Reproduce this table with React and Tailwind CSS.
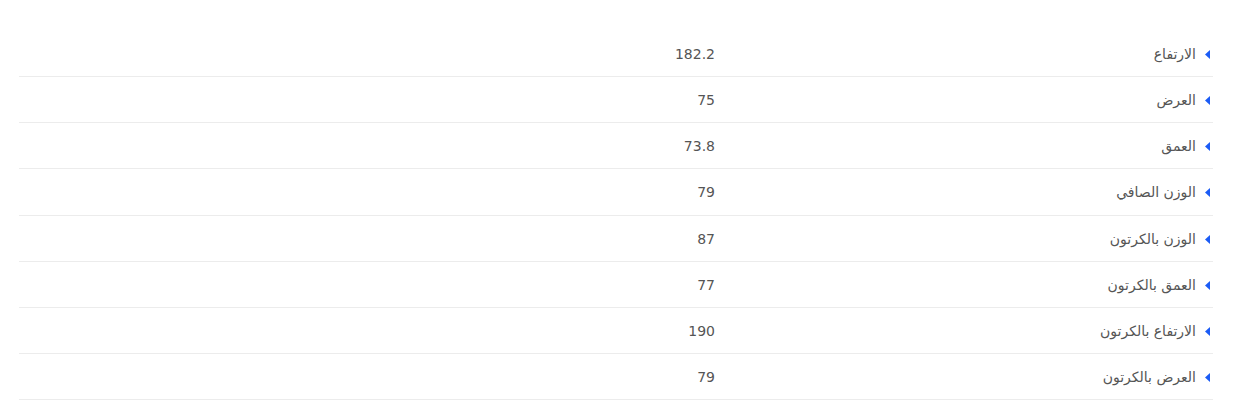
import React from 'react';

const specs = [
  { label: 'الارتفاع', value: '182.2' },
  { label: 'العرض', value: '75' },
  { label: 'العمق', value: '73.8' },
  { label: 'الوزن الصافي', value: '79' },
  { label: 'الوزن بالكرتون', value: '87' },
  { label: 'العمق بالكرتون', value: '77' },
  { label: 'الارتفاع بالكرتون', value: '190' },
  { label: 'العرض بالكرتون', value: '79' },
];

const App = () => {
  return (
    <div className="w-[1234px] h-[411px] bg-white pt-[31px] pl-[19px] font-['DejaVu_Sans',sans-serif]">
      {/* Specs table */}
      <div dir="rtl" className="w-[1194px]">
        {specs.map((row) => (
          <div
            key={row.label}
            className="flex items-center h-[46.15px] pt-[2px] border-b border-[#ececec] text-[14px] text-[#555]"
          >
            <div className="w-[498px] flex items-center gap-[9px] pr-[3px]">
              <svg width="5" height="9" viewBox="0 0 5 9" className="shrink-0">
                <path d="M0 4.5 L5 0 L5 9 Z" fill="#1c5cf5" />
              </svg>
              <span>{row.label}</span>
            </div>
            <div className="flex-1">{row.value}</div>
          </div>
        ))}
      </div>
    </div>
  );
};

export default App;
